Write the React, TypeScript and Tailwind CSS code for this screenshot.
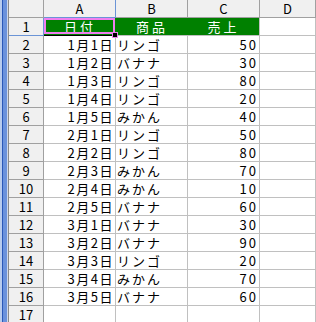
import React from "react";

const rows: [string, string, string][] = [
  ["1月1日", "リンゴ", "50"],
  ["1月2日", "バナナ", "30"],
  ["1月3日", "リンゴ", "80"],
  ["1月4日", "リンゴ", "20"],
  ["1月5日", "みかん", "40"],
  ["2月1日", "リンゴ", "50"],
  ["2月2日", "リンゴ", "80"],
  ["2月3日", "みかん", "70"],
  ["2月4日", "みかん", "10"],
  ["2月5日", "バナナ", "60"],
  ["3月1日", "バナナ", "30"],
  ["3月2日", "バナナ", "90"],
  ["3月3日", "リンゴ", "20"],
  ["3月4日", "みかん", "70"],
  ["3月5日", "バナナ", "60"],
];

const hdr =
  "h-[18px] shrink-0 flex items-center justify-center border-r border-b border-[#a0a0a0] bg-[#f0f0f0]";
const cell = "h-[18px] shrink-0 flex items-center border-r border-b border-[#c0c0c0] bg-white";

export default function App() {
  return (
    <div
      className="w-[316px] h-[322px] overflow-hidden flex bg-white text-[13px] leading-[16px] text-black"
      style={{ fontFamily: '"Noto Sans CJK JP", "DejaVu Sans", sans-serif' }}
    >
      {/* window frame edge */}
      <div className="flex shrink-0 h-full">
        <div className="w-[2px] bg-[#b8ccee]" />
        <div className="w-[1px] bg-[#2a58b8]" />
        <div className="w-[4px] bg-[#6b92dc]" />
        <div className="w-[1px] bg-[#d0d8e8]" />
        <div className="w-[1px] bg-[#8a8a8a]" />
      </div>

      <div className="flex-1 flex flex-col">
        {/* column headers */}
        <div className="flex">
          <div className={`${hdr} w-[35px]`} />
          <div className={`${hdr} w-[72px] bg-[#c6daf5] border-r-[#6b94d6] border-b-[#6b94d6]`}>A</div>
          <div className={`${hdr} w-[72px]`}>B</div>
          <div className={`${hdr} w-[72px]`}>C</div>
          <div className={`${hdr} flex-1`}>D</div>
        </div>

        {/* header row */}
        <div className="flex">
          <div className={`${hdr} w-[35px] bg-[#c6daf5] border-r-[#6b94d6] border-b-[#6b94d6]`}>1</div>
          <div className="relative h-[18px] w-[72px] shrink-0 flex items-center justify-center bg-[#008000] text-white tracking-[3px] border-b border-black">
            日付
            <div className="absolute left-0 top-0 right-[1px] bottom-[1px] border-2 border-[#f080f0]" />
            <div className="absolute right-[-2px] bottom-[-3px] w-[6px] h-[6px] bg-black border border-[#f080f0] z-10" />
          </div>
          <div className="h-[18px] w-[72px] shrink-0 flex items-center justify-center bg-[#008000] text-white tracking-[3px] border-b border-[#c0c0c0]">
            商品
          </div>
          <div className="h-[18px] w-[72px] shrink-0 flex items-center justify-center bg-[#008000] text-white tracking-[3px] border-r border-b border-[#c0c0c0]">
            売上
          </div>
          <div className={`${cell} flex-1`} />
        </div>

        {rows.map(([d, p, n], i) => (
          <div key={i} className="flex">
            <div className={`${hdr} w-[35px]`}>{i + 2}</div>
            <div className={`${cell} w-[72px] justify-end pr-[1px] tracking-[1.5px]`}>{d}</div>
            <div className={`${cell} w-[72px] pl-[1px] tracking-[2px]`}>{p}</div>
            <div className={`${cell} w-[72px] justify-end pr-[1px] tracking-[2px]`}>{n}</div>
            <div className={`${cell} flex-1`} />
          </div>
        ))}

        <div className="flex">
          <div className={`${hdr} w-[35px]`}>17</div>
          <div className={`${cell} w-[72px]`} />
          <div className={`${cell} w-[72px]`} />
          <div className={`${cell} w-[72px]`} />
          <div className={`${cell} flex-1`} />
        </div>
      </div>
    </div>
  );
}
